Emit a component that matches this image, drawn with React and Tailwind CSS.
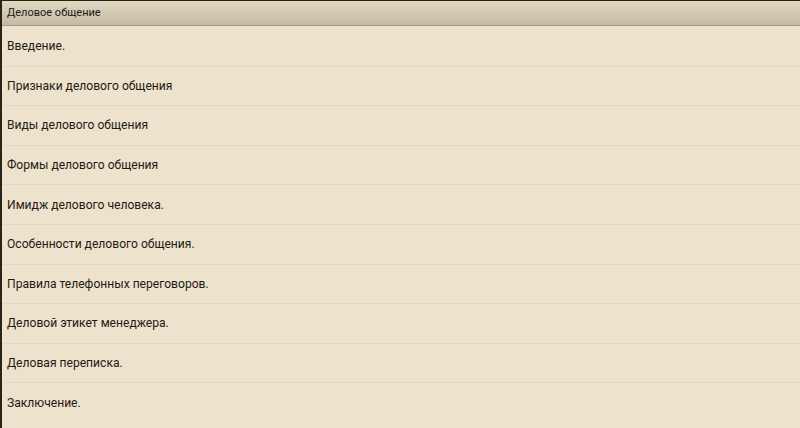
const items = [
  'Введение.',
  'Признаки делового общения',
  'Виды делового общения',
  'Формы делового общения',
  'Имидж делового человека.',
  'Особенности делового общения.',
  'Правила телефонных переговоров.',
  'Деловой этикет менеджера.',
  'Деловая переписка.',
  'Заключение.',
];

export default function App() {
  return (
    <div className="w-[800px] h-[428px] overflow-hidden bg-[#ede2cb] border-t border-t-[#2a2418] border-l-2 border-l-[#2a2418] flex flex-col font-['Roboto','Liberation_Sans',sans-serif] text-[#1e1a14]">
      <div className="h-[25px] shrink-0 flex items-center px-[5px] text-[11px] bg-gradient-to-b from-[#e0d9bf] to-[#c3bba4] border-b border-b-[#a59b87]">
        Деловое общение
      </div>
      <div className="flex flex-col">
        {items.map((t, i) => (
          <div
            key={i}
            className={`h-[39.6px] shrink-0 flex items-center px-[5px] text-[12.1px] ${i > 0 ? 'border-t border-t-[#e4d8c1]' : ''}`}
          >
            {t}
          </div>
        ))}
      </div>
    </div>
  );
}
